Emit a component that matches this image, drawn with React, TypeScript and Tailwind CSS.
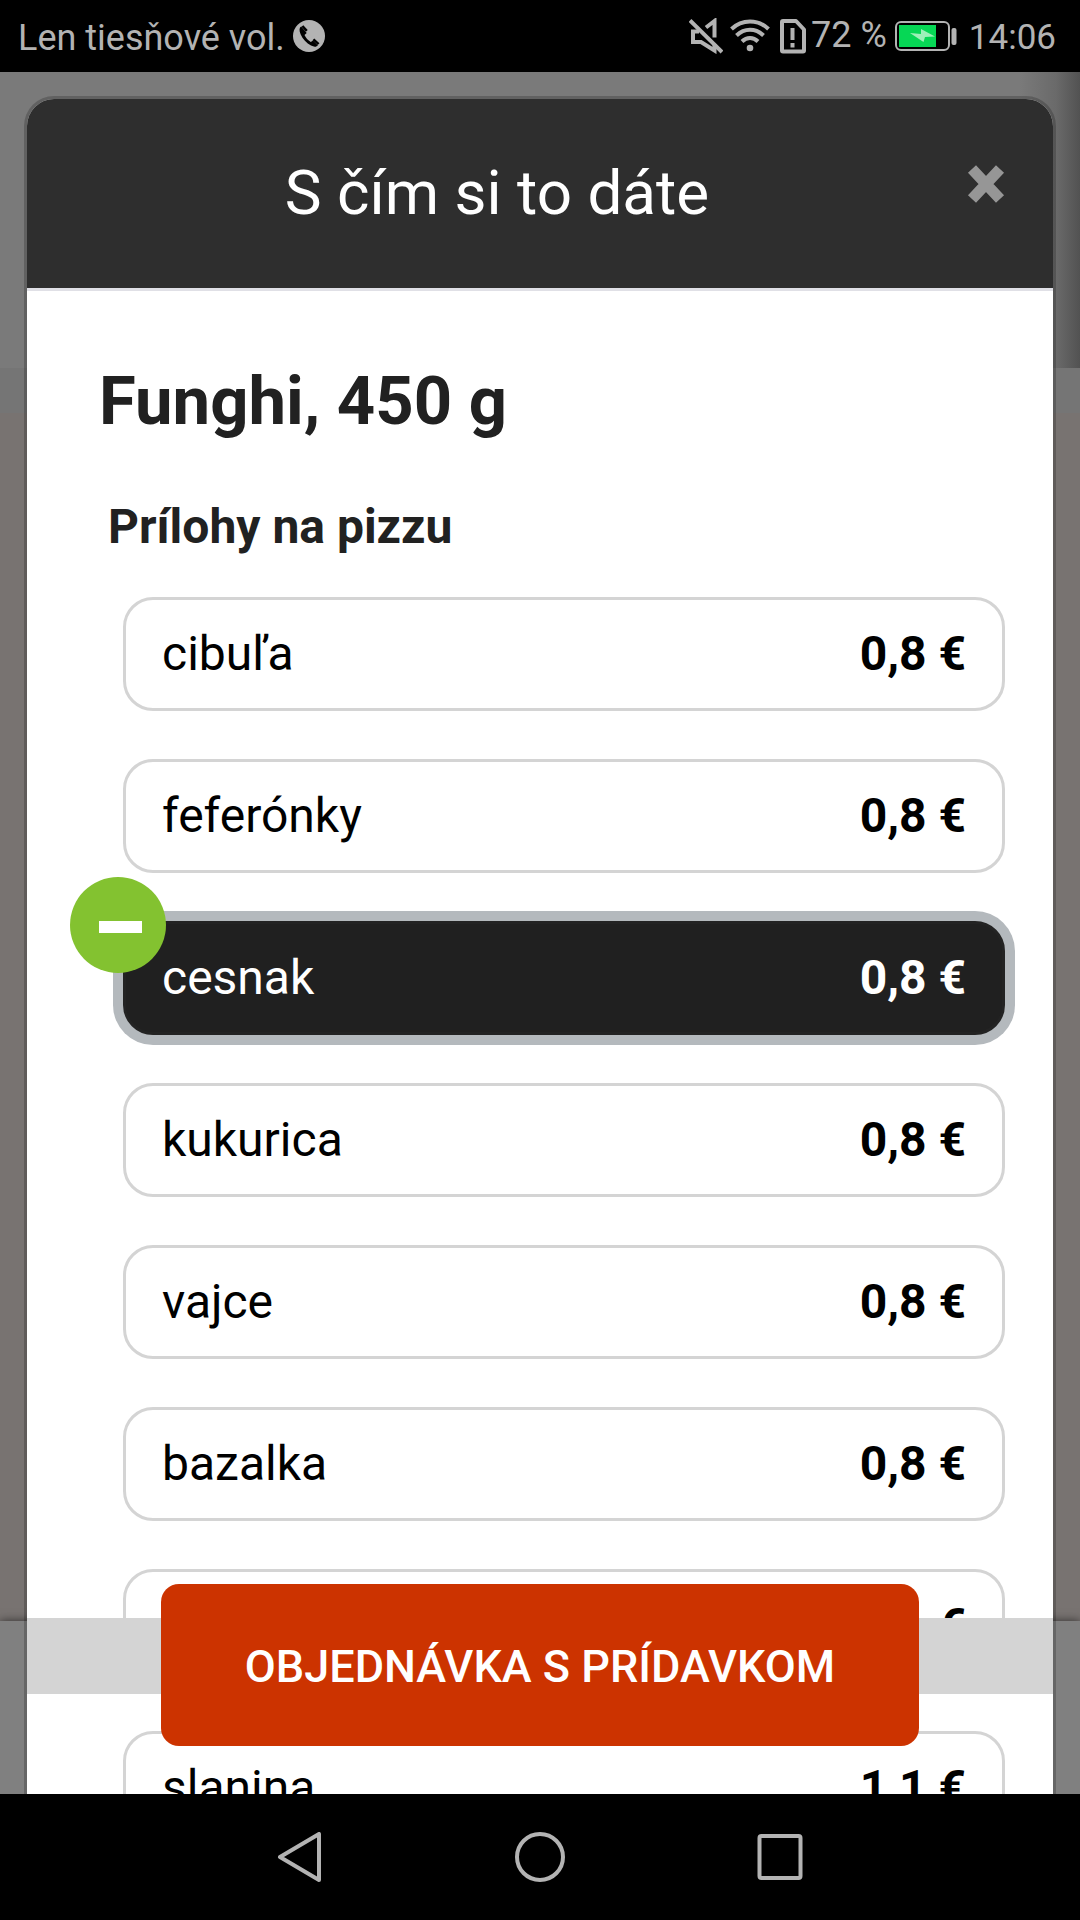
import React, { useState } from "react";

type Topping = { name: string; price: string };

const toppings: Topping[] = [
  { name: "cibuľa", price: "0,8 €" },
  { name: "feferónky", price: "0,8 €" },
  { name: "cesnak", price: "0,8 €" },
  { name: "kukurica", price: "0,8 €" },
  { name: "vajce", price: "0,8 €" },
  { name: "bazalka", price: "0,8 €" },
  { name: "", price: "1,1 €" },
  { name: "slanina", price: "1,1 €" },
];

function StatusBar() {
  return (
    <div className="flex h-[72px] shrink-0 items-center justify-between bg-black pr-[24px] pl-[18px] text-[36px] leading-[48px] text-[#b3b3b3]">
      <div className="flex items-center gap-[8px]">
        <span className="pt-[4px]">Len tiesňové vol.</span>
        <svg className="h-[32px] w-[32px]" viewBox="0 0 32 32" aria-hidden="true">
          <circle cx="16" cy="16" r="16" fill="#b3b3b3" />
          <path
            d="M8.2 6.6c-2 1-2.200 4-.6 7.600 2 4.600 6 9 10.400 11.400 3 1.500 5.600 1.500 6.800-.4l-4.700-4.800-2.300 1.600c-2.800-1.600-5-4.200-6.300-7l2.200-2z"
            fill="#000"
          />
          <path d="M9.400 6l4.400 4.800M20.400 19.400l5.200 4.800" stroke="#000" strokeWidth="2.500" />
        </svg>
      </div>
      <div className="flex items-center">
        <svg className="h-[36px] w-[34px]" viewBox="0 0 34 36" fill="none" stroke="#b3b3b3" strokeWidth="4" aria-hidden="true">
          <path d="M1 2.500L33 34" />
          <path d="M17 9.500L25.500 3v16.500M25.500 26v6.500L12 24H4V13.500h6" />
        </svg>
        <svg className="ml-[7px] h-[36px] w-[40px]" viewBox="0 0 40 36" fill="none" stroke="#b3b3b3" strokeWidth="4" aria-hidden="true">
          <path d="M1.500 11C12 1 28 1 38.500 11M6.500 17.500c8-7.600 19-7.600 27 0M12 23.500c4.800-4.600 11.200-4.600 16 0" />
          <circle cx="20" cy="30" r="3.300" fill="#b3b3b3" stroke="none" />
        </svg>
        <svg className="ml-[10px] h-[36px] w-[26px]" viewBox="0 0 26 36" fill="none" stroke="#b3b3b3" strokeWidth="4" strokeLinejoin="round" aria-hidden="true">
          <path d="M4 3h12l8 8.500V32.500q0 1-1 1H3q-1 0-1-1V4q0-1 1-1z" />
          <path d="M12.500 10v12M12.500 25v4.500" />
        </svg>
        <span className="mb-[2px] ml-[5px]">72 %</span>
        <svg className="ml-[8px] h-[30px] w-[62px]" viewBox="0 0 62 30" aria-hidden="true">
          <rect x="1" y="1" width="53" height="28" rx="5" fill="none" stroke="#b3b3b3" strokeWidth="2" />
          <rect x="4" y="4" width="37" height="22" fill="#06d755" />
          <path d="M15 12l11 1V8l14 7.500-10 .5-1.500 5z" fill="#9df0b8" />
          <rect x="56.500" y="7" width="5" height="17" rx="2" fill="#b3b3b3" />
        </svg>
        <time className="ml-[12px] pt-[4px] text-[35px]">14:06</time>
      </div>
    </div>
  );
}

function ToppingRow({ topping, selected, onToggle }: { topping: Topping; selected: boolean; onToggle: () => void }) {
  const tone = selected
    ? "border-[#232323] bg-[#202020] text-white ring-[10px] ring-[#b4b9bd]"
    : "border-[#d4d4d4] bg-white text-black";
  return (
    <li className="relative">
      <button
        type="button"
        aria-pressed={selected}
        onClick={onToggle}
        className={`flex w-full items-center justify-between rounded-[30px] border-[3px] px-[36px] py-[18px] text-[48px] leading-[72px] outline-none ${tone}`}
      >
        <span>{topping.name}</span>
        <span className="font-bold">{topping.price}</span>
      </button>
      {selected && (
        <span className="pointer-events-none absolute -top-[44px] -left-[53px] flex h-[96px] w-[96px] items-center justify-center rounded-full bg-[#83c230]">
          <span className="mt-[4px] ml-[5px] h-[12px] w-[43px] bg-white" />
        </span>
      )}
    </li>
  );
}

function NavBar() {
  return (
    <nav className="flex h-[126px] shrink-0 items-center justify-center gap-[190px] bg-black">
      <button type="button" aria-label="Späť">
        <svg className="h-[50px] w-[50px]" viewBox="0 0 50 50" fill="none" stroke="#b3b3b3" strokeWidth="4" strokeLinejoin="round">
          <path d="M5 25L44 2v46z" />
        </svg>
      </button>
      <button type="button" aria-label="Domov">
        <svg className="h-[50px] w-[50px]" viewBox="0 0 50 50" fill="none" stroke="#b3b3b3" strokeWidth="4">
          <circle cx="25" cy="25" r="23" />
        </svg>
      </button>
      <button type="button" aria-label="Prehľad">
        <svg className="h-[50px] w-[50px]" viewBox="0 0 50 50" fill="none" stroke="#b3b3b3" strokeWidth="4">
          <rect x="4.500" y="4" width="41" height="42" rx="2" />
        </svg>
      </button>
    </nav>
  );
}

export default function App() {
  const [selected, setSelected] = useState<string[]>(["cesnak"]);
  const toggle = (name: string) =>
    setSelected((s) => (s.includes(name) ? s.filter((n) => n !== name) : [...s, name]));

  return (
    <div className="flex h-screen flex-col overflow-hidden font-[Roboto,sans-serif]">
      <StatusBar />
      <div className="relative min-h-0 flex-1 overflow-hidden">
        <div className="absolute inset-0 flex flex-col" aria-hidden="true">
          <div className="h-[296px] shrink-0 bg-[linear-gradient(to_left,#525252,#6a6a6a_24px,#7a7a7a_60px)]" />
          <div className="h-[45px] shrink-0 bg-[#757575]" />
          <div className="flex-1 bg-[#787371]" />
          <div className="h-[173px] shrink-0 bg-[#808080] shadow-[0_0_9px_rgba(0,0,0,0.6)]" />
        </div>
        <div
          role="dialog"
          aria-labelledby="dialog-title"
          className="relative mx-[24px] mt-[24px] flex h-full flex-col overflow-hidden rounded-t-[30px] border-[3px] border-b-0 border-black/20 bg-white bg-clip-padding"
        >
          <header className="flex h-[192px] shrink-0 items-start border-b-[3px] border-[#e0e0e6] bg-[#2e2e2e] px-[48px] pt-[48px]">
            <h1 id="dialog-title" className="flex-1 pr-[48px] text-center text-[62px] leading-[92px] text-white">
              S čím si to dáte
            </h1>
            <button type="button" aria-label="Zavrieť" className="mt-[18px] w-[38px]">
              <svg className="h-[38px] w-[38px]" viewBox="0 0 38 38" fill="none" stroke="#969696" strokeWidth="11">
                <path d="M5 4L33 34M33 4L5 34" />
              </svg>
            </button>
          </header>
          <div className="pr-[48px] pl-[72px]">
            <h2 className="mt-[60px] text-[67px] leading-[100px] font-bold text-[#212121]">Funghi, 450 g</h2>
            <h3 className="mt-[40px] pl-[9px] text-[48px] leading-[72px] font-bold text-[#212121]">Prílohy na pizzu</h3>
            <ul className="mt-[34px] flex flex-col gap-[48px] pl-[24px]">
              {toppings.map((t) => (
                <ToppingRow
                  key={t.name}
                  topping={t}
                  selected={selected.includes(t.name)}
                  onToggle={() => toggle(t.name)}
                />
              ))}
            </ul>
          </div>
        </div>
        <div className="absolute inset-x-[27px] bottom-[48px] flex px-[134px]">
          <div className="absolute inset-x-0 top-[34px] h-[76px] bg-[#d4d4d4]" />
          <button
            type="button"
            className="relative flex-1 rounded-[18px] bg-[#cc3300] pt-[47px] pb-[43px] text-[45px] leading-[72px] font-medium text-white"
          >
            OBJEDNÁVKA S PRÍDAVKOM
          </button>
        </div>
      </div>
      <NavBar />
    </div>
  );
}
